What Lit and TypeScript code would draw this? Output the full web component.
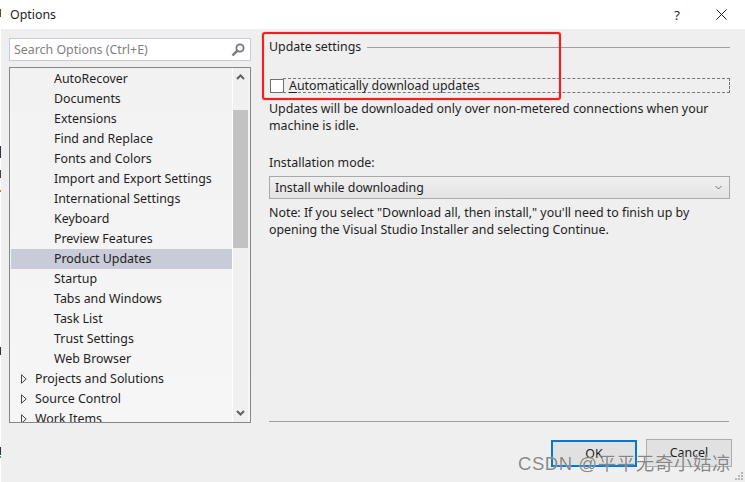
import { LitElement, html, css } from "lit";
import { customElement } from "lit/decorators.js";

const children = ["AutoRecover","Documents","Extensions","Find and Replace","Fonts and Colors","Import and Export Settings","International Settings","Keyboard","Preview Features","Product Updates","Startup","Tabs and Windows","Task List","Trust Settings","Web Browser"];
const parents = ["Projects and Solutions","Source Control","Work Items"];

@customElement("app-root")
export class AppRoot extends LitElement {
  static styles = css`
    :host { display: block; width: 745px; height: 482px; position: relative; overflow: hidden; background: #efefef;
      font-family: "Noto Sans", "Open Sans", sans-serif; font-size: 12.4px; color: #1e1e1e; line-height: 20px; }
    * { box-sizing: border-box; }
    .titlebar { height: 29px; background: #fff; display: flex; align-items: center; padding-left: 10px; font-size: 12.4px; }
    .title { flex: 1; }
    .help { width: 14px; margin-right: 32px; font-size: 13px; text-align: center; }
    .close { margin-right: 18px; display: block; }
    .body { display: flex; height: 453px; padding: 9px 15px 0 9px; }
    .left { width: 242px; margin-right: 18px; display: flex; flex-direction: column; gap: 6px; flex: none; }
    .search { height: 23px; background: #fff; border: 1px solid #c9cbdc; display: flex; align-items: center; padding: 0 5px 0 4px; color: #7f7f7f; justify-content: space-between; }
    .list { height: 356px; border: 1px solid #85868c; background: linear-gradient(#f2f2f2, #f6f6f6); display: flex; overflow: hidden; position: relative; padding: 0 2px 0 1px; }
    .rows { flex: 1; padding-top: 1px; min-width: 0; }
    .row { height: 20px; display: flex; align-items: center; white-space: nowrap; }
    .row.child { padding-left: 43px; }
    .row.parent { padding-left: 10px; gap: 8px; }
    .row.sel { background: #c9cbd9; }
    .scroll { width: 16px; flex: none; display: flex; flex-direction: column; background: #f0f0f0; border-left: 1px solid #fff; }
    .sb-btn { height: 18px; display: flex; align-items: center; justify-content: center; flex: none; }
    .track { flex: 1; padding-top: 24px; }
    .thumb { height: 138px; background: #c2c2c2; }
    .right { flex: 1; display: flex; flex-direction: column; min-width: 0; }
    .legend { display: flex; align-items: center; gap: 6px; height: 18px; }
    .legend .rule { flex: 1; height: 1px; background: #a0a0a0; }
    .check { display: flex; align-items: center; margin-top: 21px; height: 17px; padding-left: 1px; }
    .box { width: 14px; height: 14px; background: #fff; border: 1px solid #707070; flex: none; margin-right: -1px; position: relative; }
    .focus { flex: 1; height: 15px; border: 1px dashed #777; padding-left: 5px; display: flex; align-items: center; }
    u { text-underline-offset: 2px; }
    .p { margin: 0; line-height: 17px; }
    .note1 { margin-top: 6px; }
    .label { margin-top: 20px; line-height: 17px; }
    .select { margin-top: 5px; height: 23px; border: 1px solid #a9a9a9; background: linear-gradient(#f0f0f0, #e3e3e3); display: flex; align-items: center; justify-content: space-between; padding: 0 7px 0 5px; }
    .note2 { margin-top: 5px; }
    .spacer { flex: 1; }
    .footer-rule { height: 1px; background: #a0a0a0; margin-bottom: 17px; width: 460px; }
    .buttons { display: flex; justify-content: flex-end; gap: 9px; align-items: flex-end; padding-bottom: 15px; margin-right: -2px; }
    .btn { width: 86px; background: #e1e1e1; display: flex; align-items: center; justify-content: center; }
    .ok { height: 27px; border: 2px solid #0078d7; }
    .cancel { height: 28px; border: 1px solid #adadad; }
    .redbox { position: absolute; left: 262px; top: 32px; width: 299px; height: 68px; border: 2px solid #f5201c; border-radius: 3px; box-shadow: 0 0 1px #f5201c, inset 0 0 1px #f5201c; }
    .mark { position: absolute; left: 518px; top: 453px; font-size: 18.5px; line-height: 22px; color: rgba(95,95,95,.75); letter-spacing: .55px;
      font-family: "Liberation Sans", "Noto Sans CJK SC", sans-serif; white-space: nowrap; text-shadow: 0 0 1px rgba(255,255,255,.9); }
    .grip { position: absolute; right: 1px; bottom: 1px; display: block; }
    .edge { position: absolute; left: 0; top: 0; display: block; }
  `;

  render() {
    return html`
      <div class="titlebar">
        <span class="title">Options</span>
        <span class="help">?</span>
        <svg class="close" width="11" height="11" viewBox="0 0 11 11"><path d="M.5.5l10 10M10.5.5l-10 10" stroke="#222" fill="none"/></svg>
      </div>
      <div class="body">
        <div class="left">
          <div class="search">
            <span>Search Options (Ctrl+E)</span>
            <svg width="14" height="14" viewBox="0 0 14 14"><circle cx="9" cy="5" r="3.6" fill="none" stroke="#777" stroke-width="1.8"/><path d="M6.4 7.6L1.5 12.5" stroke="#777" stroke-width="2.4"/></svg>
          </div>
          <div class="list">
            <div class="rows">
              ${children.map(c => html`<div class="row child ${c === "Product Updates" ? "sel" : ""}">${c}</div>`)}
              ${parents.map(p => html`<div class="row parent">
                <svg width="6" height="10" viewBox="0 0 6 10"><path d="M.5.8L5.2 5 .5 9.2z" fill="none" stroke="#444"/></svg>
                <span>${p}</span></div>`)}
            </div>
            <div class="scroll">
              <div class="sb-btn"><svg width="9" height="6" viewBox="0 0 9 6"><path d="M1 5l3.5-3.5L8 5" fill="none" stroke="#606060" stroke-width="2"/></svg></div>
              <div class="track"><div class="thumb"></div></div>
              <div class="sb-btn"><svg width="9" height="6" viewBox="0 0 9 6"><path d="M1 1l3.5 3.5L8 1" fill="none" stroke="#606060" stroke-width="2"/></svg></div>
            </div>
          </div>
        </div>
        <div class="right">
          <div class="legend"><span>Update settings</span><span class="rule"></span></div>
          <div class="check"><span class="box"></span><span class="focus"><span><u>A</u>utomatically download updates</span></span></div>
          <p class="p note1">Updates will be downloaded only over non-metered connections when your machine is idle.</p>
          <div class="label">Installation mode:</div>
          <div class="select"><span>Install while downloading</span>
            <svg width="7" height="5" viewBox="0 0 7 5"><path d="M.5 1l3 3 3-3" fill="none" stroke="#777"/></svg></div>
          <p class="p note2">Note: If you select "Download all, then install," you'll need to finish up by opening the Visual Studio Installer and selecting Continue.</p>
          <div class="spacer"></div>
          <div class="footer-rule"></div>
          <div class="buttons"><div class="btn ok">OK</div><div class="btn cancel">Cancel</div></div>
        </div>
      </div>
      <div class="redbox"></div>
      <div class="mark">CSDN @平平无奇小姑凉</div>
      <svg class="grip" width="9" height="9" viewBox="0 0 9 9" fill="#b5b5b5"><rect x="6" y="0" width="2" height="2"/><rect x="3" y="3" width="2" height="2"/><rect x="6" y="3" width="2" height="2"/><rect x="0" y="6" width="2" height="2"/><rect x="3" y="6" width="2" height="2"/><rect x="6" y="6" width="2" height="2"/></svg>
      <svg class="edge" width="2" height="482" viewBox="0 0 2 482">
        <rect width="1" height="482" fill="#fff"/>
        <rect y="9" width="1" height="8" fill="#6b4a22"/>
        <rect y="146" width="1" height="12" fill="#2a3550"/>
        <rect y="170" width="1" height="8" fill="#444"/>
        <rect y="190" width="1" height="2" fill="#d07a30"/>
        <rect y="347" width="1" height="8" fill="#333"/>
        <rect y="447" width="1" height="8" fill="#334"/>
        <rect y="456" width="1" height="2" fill="#4a4"/>
      </svg>
    `;
  }
}
